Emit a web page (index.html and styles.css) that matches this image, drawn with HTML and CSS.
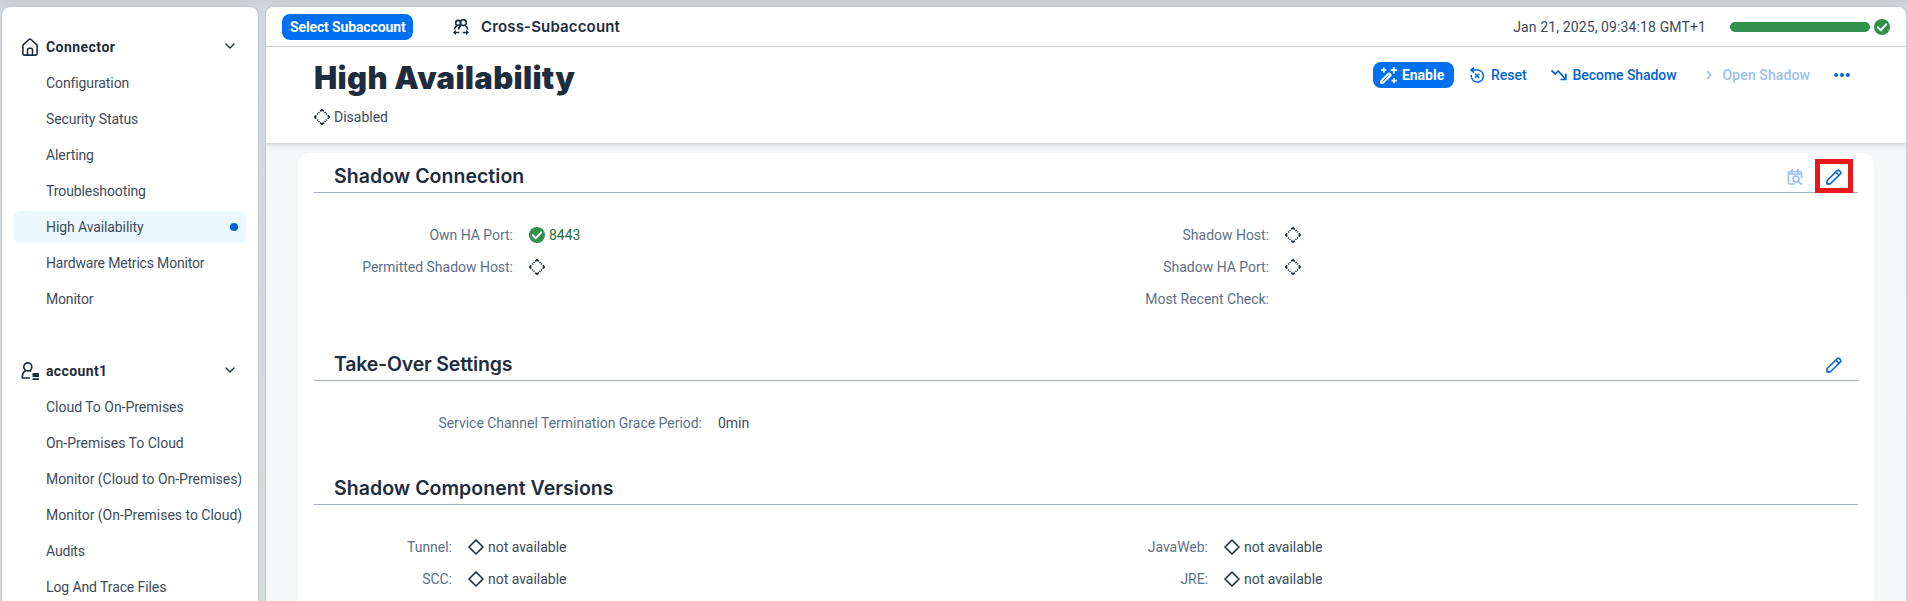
FILE: index.html
```
<!DOCTYPE html>
<html lang="en">
<head>
<meta charset="utf-8">
<title>High Availability</title>
<link rel="stylesheet" href="styles.css">
</head>
<body>
<svg class="defs" width="0" height="0">
  <symbol id="dashed" viewBox="0 0 16 16"><path d="M6.3 2.3 8 .7l1.7 1.6M13.700 6.300l1.600 1.700-1.600 1.700M9.700 13.700 8 15.300l-1.700-1.600M2.300 9.700.7 8l1.600-1.700" fill="none" stroke="currentColor" stroke-width="1.7"/><path d="M10.600 3.200l.9.900M12 4.600l.8.800M12.800 10.600l-.8.800M11.400 12l-.8.800M5.400 12.800l-.8-.8M4 11.400l-.8-.8M3.200 5.400l.8-.8M4.600 4l.8-.8" fill="none" stroke="currentColor" stroke-width="1.600"/></symbol>
  <symbol id="diamond" viewBox="0 0 16 16"><path d="M8 1 15 8 8 15 1 8z" fill="none" stroke="currentColor" stroke-width="1.600" stroke-linejoin="round"/></symbol>
  <symbol id="check" viewBox="0 0 16 16"><circle cx="8" cy="8" r="8" fill="currentColor"/><path d="M3.800 8.300 6.700 11.200 12.200 5.400" fill="none" stroke="#fff" stroke-width="2" stroke-linecap="round" stroke-linejoin="round"/></symbol>
  <symbol id="pencil" viewBox="0 0 16 16"><path d="M1 15v-3.200L11.400 1.400Q12.200.7 13 1.400L14.600 3q.7.800 0 1.600L4.200 15zM9.800 3l3.200 3.200" fill="none" stroke="currentColor" stroke-width="1.500" stroke-linejoin="round"/><path d="M.8 15.200v-3l3 3z" fill="currentColor"/></symbol>
  <symbol id="down" viewBox="0 0 12 12"><path d="M2 4l4 4 4-4" fill="none" stroke="currentColor" stroke-width="1.400" stroke-linecap="round" stroke-linejoin="round"/></symbol>
</svg>

<div class="shell">
  <nav class="sidebar">
    <div class="group">
      <svg class="group-icon" viewBox="0 0 18 18"><path d="M1.900 7.200 8 1.500q1-.8 2 0l6.100 5.700v8.600q0 1.300-1.300 1.300H3.200q-1.300 0-1.300-1.300z" fill="none" stroke="currentColor" stroke-width="1.600" stroke-linejoin="round"/><path d="M6.500 17v-5q0-1.800 1.800-1.800h1.400q1.800 0 1.800 1.800v5" fill="none" stroke="currentColor" stroke-width="1.600"/></svg>
      <span class="group-name connector">Connector</span>
      <svg class="chevron"><use href="#down"/></svg>
    </div>
    <a class="item">Configuration</a>
    <a class="item">Security Status</a>
    <a class="item">Alerting</a>
    <a class="item">Troubleshooting</a>
    <a class="item selected">High Availability<i class="dot"></i></a>
    <a class="item tight">Hardware Metrics Monitor</a>
    <a class="item tight">Monitor</a>
    <div class="group second">
      <svg class="group-icon" viewBox="0 0 18 18"><g fill="none" stroke="currentColor" stroke-width="1.700"><circle cx="6.800" cy="4.900" r="4"/><path d="M9 16H1.200c0-4 1.300-6.200 3.800-7.400M8.800 8.600l1.400 1"/></g><path d="M11.500 11H18v4h-6.500zM11.500 16.200H18V18h-6.500z" fill="currentColor"/></svg>
      <span class="group-name">account1</span>
      <svg class="chevron"><use href="#down"/></svg>
    </div>
    <a class="item wide">Cloud To On-Premises</a>
    <a class="item wide">On-Premises To Cloud</a>
    <a class="item wide">Monitor (Cloud to On-Premises)</a>
    <a class="item wide">Monitor (On-Premises to Cloud)</a>
    <a class="item tight">Audits</a>
    <a class="item">Log And Trace Files</a>
  </nav>

  <main class="main">
    <header class="topbar">
      <button class="primary select">Select Subaccount</button>
      <svg class="cross" viewBox="0 0 16 16"><g fill="none" stroke="currentColor" stroke-width="1.600"><circle cx="5.200" cy="3.900" r="2.500"/><circle cx="10.300" cy="3.600" r="3"/><path d="M1.500 10.500c0-2 1.200-3.200 2.700-3.800M5.700 10.500c0-2 1.200-3.400 2.700-3.900M12.200 6.700c1.500.6 2.300 2 2.300 3.800M1 13.500h5.300M9.700 13.500H15"/></g><path d="M0 13.500 3 11v5zM16 13.500 13 11v5z" fill="currentColor"/></svg>
      <span class="context">Cross-Subaccount</span>
      <span class="date">Jan 21, 2025, 09:34:18 GMT+1</span>
      <span class="meter"></span>
      <svg class="icon good"><use href="#check"/></svg>
    </header>

    <section class="page-head">
      <div>
        <h1>High Availability</h1>
        <div class="status"><svg class="icon"><use href="#dashed"/></svg><span>Disabled</span></div>
      </div>
      <div class="actions">
        <button class="primary enable"><svg class="wand" viewBox="0 0 16 16"><path d="M2 14 8.600 7.400" stroke="#fff" stroke-width="4.400" stroke-linecap="round"/><path d="M2.300 13.700 8.400 7.600" stroke="#0070f2" stroke-width=".8"/><path d="M1 3h5M3.500.5v5M10 3h6M13 0v6M10.800 12.800h5M13.300 10.300v5" stroke="#fff" stroke-width="1.700"/></svg>Enable</button>
        <button class="link reset"><svg class="icon" viewBox="0 0 16 16"><path d="M5 .5 2 3l3 2.600M2.300 3H8.300a6 6 0 1 1-5.700 7.800" fill="none" stroke="currentColor" stroke-width="1.600"/><path d="M2.300 8v2.500M6 6.800l4.200 4.200M10.200 6.800 6 11" stroke="currentColor" stroke-width="1.500"/></svg>Reset</button>
        <button class="link become"><svg class="icon" viewBox="0 0 16 16"><path d="M.5 3.500 4.300 7l3-3 7 8M14.900 6.500v6H9.500" fill="none" stroke="currentColor" stroke-width="1.700"/></svg>Become Shadow</button>
        <button class="link open"><svg class="icon" viewBox="0 0 16 16"><path d="M6 4.200 9.700 8 6 11.800" fill="none" stroke="currentColor" stroke-width="1.700"/></svg>Open Shadow</button>
        <svg class="more" viewBox="0 0 16 16"><g fill="currentColor"><circle cx="2.100" cy="8" r="2"/><circle cx="8" cy="8" r="2"/><circle cx="13.900" cy="8" r="2"/></g></svg>
      </div>
    </section>

    <div class="content">
      <div class="card">
        <section class="block">
          <div class="block-head">
            <h2>Shadow Connection</h2>
            <svg class="icon disabled" viewBox="0 0 16 16"><path d="M8 15H3.200Q1.500 15 1.500 13.300V4Q1.500 2.500 3.200 2.500h9.600q1.700 0 1.700 1.500v5M1.500 5h13M5 0v5M11 0v5" fill="none" stroke="currentColor" stroke-width="1.700"/><circle cx="9" cy="10" r="2.900" fill="none" stroke="currentColor" stroke-width="1.700"/><path d="m11 12 4 3.700" stroke="currentColor" stroke-width="1.700"/></svg>
            <span class="marked"><svg class="icon edit"><use href="#pencil"/></svg></span>
          </div>
          <div class="fields connection">
            <dl>
              <dt>Own HA Port:</dt><dd class="good"><svg class="icon"><use href="#check"/></svg>8443</dd>
              <dt>Permitted Shadow Host:</dt><dd><svg class="icon"><use href="#dashed"/></svg></dd>
            </dl>
            <dl>
              <dt>Shadow Host:</dt><dd><svg class="icon"><use href="#dashed"/></svg></dd>
              <dt>Shadow HA Port:</dt><dd><svg class="icon"><use href="#dashed"/></svg></dd>
              <dt>Most Recent Check:</dt><dd></dd>
            </dl>
          </div>
        </section>
        <section class="block takeover">
          <div class="block-head">
            <h2>Take-Over Settings</h2>
            <span class="edit-slot"><svg class="icon edit"><use href="#pencil"/></svg></span>
          </div>
          <div class="fields grace">
            <dl><dt>Service Channel Termination Grace Period:</dt><dd>0min</dd></dl>
          </div>
        </section>
        <section class="block versions">
          <div class="block-head"><h2>Shadow Component Versions</h2></div>
          <div class="fields parts">
            <dl>
              <dt>Tunnel:</dt><dd><svg class="icon"><use href="#diamond"/></svg>not available</dd>
              <dt>SCC:</dt><dd><svg class="icon"><use href="#diamond"/></svg>not available</dd>
            </dl>
            <dl>
              <dt>JavaWeb:</dt><dd><svg class="icon"><use href="#diamond"/></svg>not available</dd>
              <dt>JRE:</dt><dd><svg class="icon"><use href="#diamond"/></svg>not available</dd>
            </dl>
          </div>
        </section>
      </div>
    </div>
  </main>
</div>
</body>
</html>
```
FILE: styles.css
```
* { box-sizing: border-box; }

body {
  margin: 0;
  height: 601px;
  overflow: hidden;
  background: linear-gradient(#c9ced3, #d3d8dd 8px, #d5dadd);
  color: #1d2d3e;
  font: 14px/16px Roboto, sans-serif;
  letter-spacing: -0.02px;
}

svg { display: block; flex: none; }
.defs { position: absolute; }
.icon { width: 16px; height: 16px; }

.shell { display: flex; gap: 8px; height: 601px; padding: 7px 1px 0 2px; }

/* Navigation */
.sidebar {
  width: 256px;
  flex: none;
  padding: 24px 12px 0;
  background: #fff;
  border-radius: 8px 8px 0 0;
  box-shadow: 0 0 2px rgba(34, 53, 72, .3);
  overflow: hidden;
}
.group, .item {
  display: flex;
  align-items: center;
  height: 32px;
  margin-bottom: 4px;
  border-radius: 6px;
}
.group { padding: 0 10px 0 7px; }
.group.second { margin-top: 40px; }
.group-icon { width: 18px; height: 18px; margin-right: 7px; }
.group-name { flex: 1; font-weight: 700; letter-spacing: .38px; }
.connector { letter-spacing: .46px; }
.chevron { width: 12px; height: 12px; margin-top: -2px; }
.item {
  padding: 0 8px 0 32px;
  color: #3d4b5a;
  letter-spacing: -.1px;
  white-space: nowrap;
}
.item.tight { letter-spacing: -.18px; }
.item.wide { letter-spacing: -.02px; }
.item.selected { justify-content: space-between; background: #ebf8ff; }
.dot { width: 8px; height: 8px; border-radius: 50%; background: #0064d9; }

/* Main area */
.main {
  flex: 1;
  display: flex;
  flex-direction: column;
  background: #f5f6f7;
  border-radius: 8px 8px 0 0;
  box-shadow: 0 0 2px rgba(34, 53, 72, .3);
  overflow: hidden;
}
.topbar {
  display: flex;
  align-items: center;
  height: 40px;
  flex: none;
  padding: 0 16px;
  background: #fff;
  border-bottom: 1px solid #d3d5d8;
}
button {
  display: flex;
  align-items: center;
  height: 26px;
  border: 0;
  padding: 0;
  background: none;
  font: 500 14px/16px Roboto, sans-serif;
  white-space: nowrap;
}
.primary { border-radius: 8px; background: #0070f2; color: #fff; font-weight: 700; }
.select { width: 131px; padding-left: 8px; letter-spacing: -.13px; }
.cross { width: 16px; height: 16px; margin: 0 12px 0 40px; }
.context { font: 600 15px/20px Inter, sans-serif; letter-spacing: .15px; }
.date { margin-left: auto; color: #3d4b5a; letter-spacing: .12px; }
.meter { width: 140px; height: 10px; margin: 0 4px 0 24px; border-radius: 5px; background: #30914c; }

.page-head {
  display: flex;
  justify-content: space-between;
  height: 97px;
  flex: none;
  padding: 15px 56px 0 48px;
  background: #fff;
  border-bottom: 1px solid #d3d5d8;
  box-shadow: 0 1px 3px rgba(34, 53, 72, .16);
}
h1 { margin: 0; font: 900 31px/32px Inter, sans-serif; letter-spacing: .3px; }
.status { display: flex; align-items: center; gap: 4px; margin-top: 15px; }
.status span { color: #3d4b5a; letter-spacing: 0; }
.actions { display: flex; height: 26px; align-items: center; color: #0064d9; }
.enable { width: 81px; padding-left: 7px; gap: 5px; }
.wand { width: 17px; height: 17px; }
.link { color: #0064d9; gap: 6px; }
.reset { margin-left: 15px; }
.become { margin-left: 24px; letter-spacing: -.06px; }
.open { margin-left: 24px; color: #99c1f0; letter-spacing: .1px; }
.more { width: 16px; height: 16px; margin-left: 24px; }

.content { flex: 1; padding: 9px 32px 0; min-height: 0; }
.card { height: 460px; padding: 0 16px; background: #fff; border-radius: 12px 12px 0 0; }
.block-head {
  display: flex;
  align-items: flex-end;
  height: 40px;
  padding-left: 20px;
  border-bottom: 1px solid #a4b3c4;
}
h2 { flex: 1; margin: 0 0 2px; font: 600 19.500px/28px Inter, sans-serif; letter-spacing: .04px; }
.takeover h2 { letter-spacing: -.18px; }
.disabled { margin: 0 12px 7px 0; color: #99c1f0; }
.edit { color: #0064d9; }
.marked { height: 34px; width: 38px; margin: 0 5px -1px 0; padding: 5px 6px; border: 5px solid #e8191c; }
.edit-slot { margin: 0 16px 7px 0; }

.fields { display: flex; padding-top: 26px; }
dl { display: grid; grid-auto-rows: 32px; align-items: center; column-gap: 16px; margin: 0; width: 756px; }
.connection { height: 148px; }
.connection dl { grid-template-columns: 199px 1fr; align-content: start; }
.grace { height: 84px; }
.grace dl { grid-template-columns: 388px 1fr; }
.parts dl { grid-template-columns: 138px 1fr; }
dt { text-align: right; color: #5c7188; white-space: nowrap; }
dd { display: flex; align-items: center; gap: 4px; margin: 0; color: #3d4b5a; }
dd .icon { color: #1d2d3e; }
.good, dd.good .icon { color: #30914c; }
dd.good { color: #256f3a; }
```
